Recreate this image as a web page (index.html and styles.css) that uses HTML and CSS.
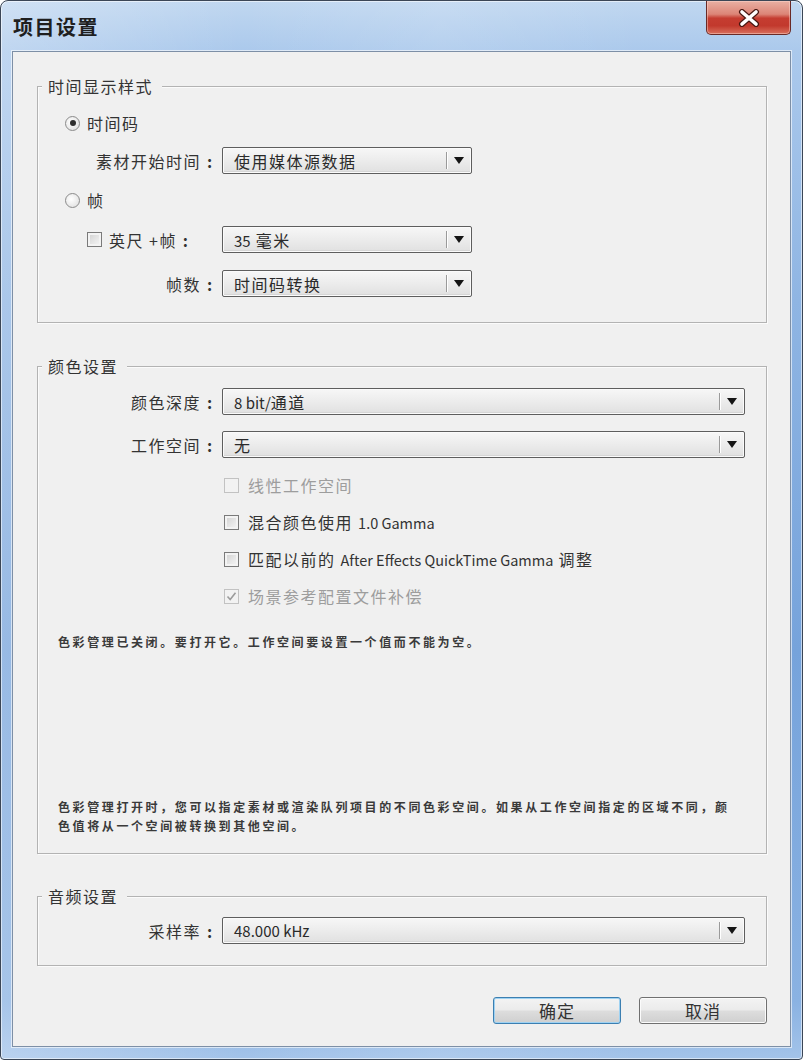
FILE: index.html
```html
<!DOCTYPE html>
<html lang="zh-CN">
<head>
<meta charset="utf-8">
<title>项目设置</title>
<link rel="stylesheet" href="styles.css">
</head>
<body>
<div class="window">
  <div class="titlebar">
    <span class="title">项目设置</span>
    <div class="close">
      <svg width="22" height="18" viewBox="0 0 22 18">
        <path d="M4 3 L18 15 M18 3 L4 15" stroke="#4a1812" stroke-width="6" stroke-linecap="round" fill="none"/>
        <path d="M4 3 L18 15 M18 3 L4 15" stroke="#ffffff" stroke-width="3.6" stroke-linecap="round" fill="none"/>
      </svg>
    </div>
  </div>
  <div class="client">
    <div class="group g-time">
      <span class="legend">时间显示样式</span>
      <div class="radio-row r1"><span class="radio checked"></span><span class="txt">时间码</span></div>
      <div class="field-row f1"><span class="lbl">素材开始时间<span class="colon">:</span></span><div class="select short"><span class="val">使用媒体源数据</span><span class="sep"></span><span class="arrow"></span></div></div>
      <div class="radio-row r2"><span class="radio"></span><span class="txt">帧</span></div>
      <div class="field-row f2"><span class="lbl feet"><span class="check"></span><span class="txt">英尺 +帧<span class="colon">:</span></span></span><div class="select short"><span class="val"><span class="lat">35</span> 毫米</span><span class="sep"></span><span class="arrow"></span></div></div>
      <div class="field-row f3"><span class="lbl">帧数<span class="colon">:</span></span><div class="select short"><span class="val">时间码转换</span><span class="sep"></span><span class="arrow"></span></div></div>
    </div>

    <div class="group g-color">
      <span class="legend">颜色设置</span>
      <div class="field-row c1"><span class="lbl">颜色深度<span class="colon">:</span></span><div class="select long"><span class="val"><span class="lat">8 bit/</span>通道</span><span class="sep"></span><span class="arrow"></span></div></div>
      <div class="field-row c2"><span class="lbl">工作空间<span class="colon">:</span></span><div class="select long"><span class="val">无</span><span class="sep"></span><span class="arrow"></span></div></div>
      <div class="checks">
        <div class="check-row disabled"><span class="check"></span><span class="txt">线性工作空间</span></div>
        <div class="check-row"><span class="check"></span><span class="txt">混合颜色使用 <span class="lat">1.0 Gamma</span></span></div>
        <div class="check-row"><span class="check"></span><span class="txt">匹配以前的 <span class="lat">After Effects QuickTime Gamma</span> 调整</span></div>
        <div class="check-row disabled"><span class="check checked"><svg width="13" height="13" viewBox="0 0 13 13"><path d="M2.5 6.5 L5.2 9.5 L10.5 2.8" stroke="#9c9c9c" stroke-width="1.6" fill="none"/></svg></span><span class="txt">场景参考配置文件补偿</span></div>
      </div>
      <p class="note n1">色彩管理已关闭。要打开它。工作空间要设置一个值而不能为空。</p>
      <p class="note n2">色彩管理打开时，您可以指定素材或渲染队列项目的不同色彩空间。如果从工作空间指定的区域不同，颜色值将从一个空间被转换到其他空间。</p>
    </div>

    <div class="group g-audio">
      <span class="legend">音频设置</span>
      <div class="field-row a1"><span class="lbl">采样率<span class="colon">:</span></span><div class="select long"><span class="val lat">48.000 kHz</span><span class="sep"></span><span class="arrow"></span></div></div>
    </div>

    <div class="buttons">
      <button class="btn default">确定</button>
      <button class="btn">取消</button>
    </div>
  </div>
</div>
</body>
</html>
```

FILE: styles.css
```css
html, body {
  margin: 0;
  padding: 0;
  background: #ffffff;
}

body {
  font-family: "Noto Sans CJK SC", "Noto Sans", sans-serif;
  color: #333333;
}

.window {
  box-sizing: border-box;
  width: 803px;
  height: 1060px;
  border: 1px solid #3b4656;
  border-radius: 8px 8px 4px 4px;
  padding: 0 11px 12px 11px;
  display: flex;
  flex-direction: column;
  background:
    linear-gradient(to right, rgba(255,255,255,0.25), rgba(255,255,255,0) 30%, rgba(255,255,255,0.12) 55%, rgba(255,255,255,0) 80%),
    linear-gradient(to bottom, #c0d7f0 0px, #abc9ec 50px, #8fb5e3 300px, #76a3db 650px, #8ab2e2 1000px, #a4c4ea 1060px);
  box-shadow: inset 0 0 0 1px rgba(255,255,255,0.55);
}

.titlebar {
  height: 50px;
  flex-shrink: 0;
  display: flex;
  align-items: flex-start;
}

.title {
  margin-top: 15px;
  padding-left: 1px;
  font-size: 20px;
  line-height: 22px;
  font-weight: 700;
  letter-spacing: 1.5px;
  color: #1f1f1f;
}

.close {
  margin-left: auto;
  width: 85px;
  height: 34px;
  box-sizing: border-box;
  border: 1px solid #6a2a26;
  border-top: none;
  border-radius: 0 0 5px 5px;
  background: linear-gradient(to bottom, #e9b0a3 0%, #dc8577 40%, #c53d31 52%, #c2392d 75%, #d9705d 100%);
  box-shadow: inset 0 0 0 1px rgba(255,220,210,0.45);
  display: flex;
  align-items: center;
  justify-content: center;
}

.client {
  flex: 1;
  border: 1px solid #7d8fa6;
  background: #f0f0f0;
  box-shadow: 0 0 0 1px rgba(255,255,255,0.6);
  display: flex;
  flex-direction: column;
}

.group {
  position: relative;
  border: 1px solid #b3b3b3;
  margin-left: 24px;
  margin-right: 23px;
  box-shadow: 1px 1px 0 #fbfbfb, inset 1px 1px 0 #fbfbfb;
}

.legend {
  position: absolute;
  top: -12px;
  left: 4px;
  padding: 0 9px 0 6px;
  background: #f0f0f0;
  font-size: 16px;
  line-height: 22px;
  letter-spacing: 1.5px;
  color: #333;
}

.g-time {
  margin-top: 34px;
  padding: 24px 0 25px;
}

.g-color {
  margin-top: 43px;
  padding: 21px 0 18px;
}

.g-audio {
  margin-top: 42px;
  padding: 20px 0 21px;
}

/* rows */
.radio-row,
.check-row {
  display: flex;
  align-items: center;
  font-size: 16px;
  letter-spacing: 1.5px;
  color: #333;
}

.radio-row {
  height: 24px;
  padding-left: 27px;
}

.r2 { margin-top: 14px; }

.radio {
  width: 15px;
  height: 15px;
  box-sizing: border-box;
  border: 1px solid #8b8b8b;
  border-radius: 50%;
  background: radial-gradient(circle at 40% 40%, #ffffff 0%, #e6e6e6 70%, #d4d4d4 100%);
  margin-right: 7px;
  display: flex;
  align-items: center;
  justify-content: center;
}

.radio.checked::after {
  content: "";
  width: 6px;
  height: 6px;
  border-radius: 50%;
  background: #2e2e2e;
}

.field-row {
  display: flex;
  align-items: center;
  height: 27px;
}

.f1 { margin-top: 12px; }
.f2 { margin-top: 14px; }
.f3 { margin-top: 17px; }
.c2 { margin-top: 16px; }

.lbl {
  width: 180px;
  flex-shrink: 0;
  text-align: right;
  font-size: 16px;
  letter-spacing: 1.5px;
  color: #333;
}

.colon {
  display: inline-block;
  width: 17px;
  text-align: center;
  letter-spacing: 0;
  font-weight: 700;
}

.lbl.feet {
  display: flex;
  align-items: center;
  text-align: left;
  padding-left: 49px;
  box-sizing: border-box;
}

.lbl.feet .check {
  margin-right: 7px;
}

.select {
  margin-left: 4px;
  height: 27px;
  box-sizing: border-box;
  border: 1px solid #5e5e5e;
  border-radius: 2px;
  background: linear-gradient(to bottom, #f7f7f7 0%, #ededed 45%, #e0e0e0 100%);
  box-shadow: inset 0 0 0 1px #fbfbfb, inset 0 -2px 0 #d6d6d6;
  display: flex;
  align-items: center;
  position: relative;
}

.select.short { width: 250px; }
.select.long { width: 523px; }

.select .val {
  flex: 1;
  padding-left: 11px;
  font-size: 16px;
  letter-spacing: 1.5px;
  color: #2a2a2a;
  white-space: nowrap;
}

.lat,
.select .val.lat,
.select .val .lat {
  letter-spacing: 0;
  font-size: 15px;
}

.select .sep {
  width: 1px;
  height: 17px;
  background: #9a9a9a;
  box-shadow: 1px 0 0 #ffffff;
}

.select .arrow {
  width: 0;
  height: 0;
  margin: 0 7px 0 7px;
  border-left: 5px solid transparent;
  border-right: 5px solid transparent;
  border-top: 7px solid #151515;
}

/* checkboxes */
.checks {
  margin-top: 16px;
  padding-left: 186px;
  display: flex;
  flex-direction: column;
  gap: 15px;
}

.check-row {
  height: 22px;
}

.check {
  width: 15px;
  height: 15px;
  box-sizing: border-box;
  border: 1px solid #7a7a7a;
  background: linear-gradient(135deg, #cfcfcf 0%, #e8e8e8 60%, #f6f6f6 100%);
  box-shadow: inset 0 0 0 2px #f3f3f3;
  flex-shrink: 0;
  display: flex;
  align-items: center;
  justify-content: center;
}

.check-row .check {
  margin-right: 9px;
}

.check-row .txt .lat {
  font-size: 14.5px;
  letter-spacing: 0;
}

.check-row.disabled {
  color: #9d9d9d;
}

.check-row.disabled .check {
  border-color: #c2c2c2;
  background: #f2f2f2;
  box-shadow: none;
}

.check.checked svg {
  display: block;
}

/* notes */
.note {
  margin: 0;
  padding-left: 20px;
  font-size: 12px;
  font-weight: 700;
  letter-spacing: 2.6px;
  color: #3a3a3a;
}

.n1 {
  margin-top: 26px;
  line-height: 18px;
}

.n2 {
  margin-top: 146px;
  width: 680px;
  line-height: 19px;
}

/* buttons */
.buttons {
  margin-top: 31px;
  padding-right: 23px;
  display: flex;
  justify-content: flex-end;
  gap: 18px;
}

.btn {
  width: 128px;
  height: 27px;
  box-sizing: border-box;
  border: 1px solid #707070;
  border-radius: 3px;
  background: linear-gradient(to bottom, #f3f3f3 0%, #ebebeb 48%, #dddddd 52%, #cfcfcf 100%);
  box-shadow: inset 0 0 0 1px #fbfbfb;
  font-family: "Noto Sans CJK SC", "Noto Sans", sans-serif;
  font-size: 17px;
  letter-spacing: 1px;
  color: #333;
  padding: 0;
  line-height: 24px;
}

.btn.default {
  border-color: #3c7fb1;
  box-shadow: inset 0 0 0 1px #9fd2f2;
}
```
